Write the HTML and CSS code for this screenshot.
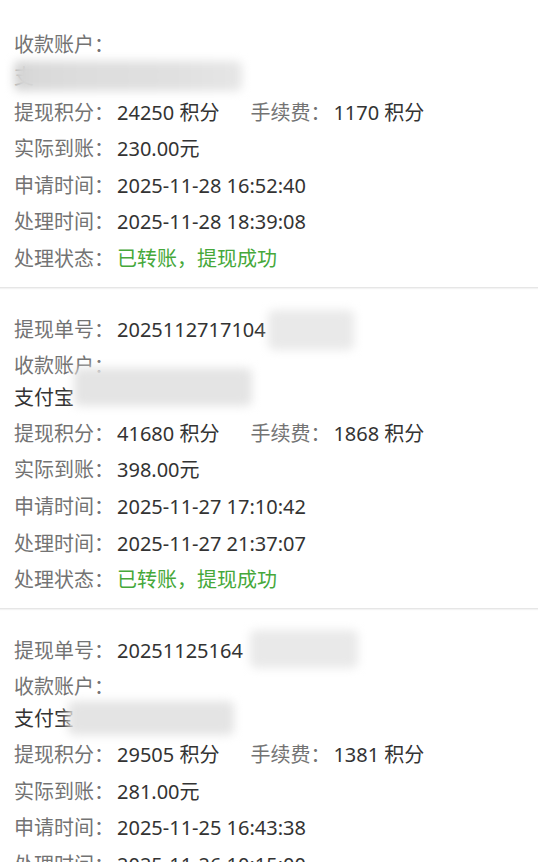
FILE: index.html
```html
<!DOCTYPE html>
<html lang="zh-CN">
<head>
<meta charset="utf-8">
<title>提现记录</title>
<link rel="stylesheet" href="styles.css">
</head>
<body>
<div class="list">
  <div class="card card-first">
    <div class="acct-label">收款账户：</div>
    <div class="acct-value"><span class="dim">支</span></div>
    <div class="row"><span class="label">提现积分：</span><span class="val">24250 积分</span><span class="label fee">手续费：</span><span class="val">1170 积分</span></div>
    <div class="row"><span class="label">实际到账：</span><span class="val">230.00元</span></div>
    <div class="row"><span class="label">申请时间：</span><span class="val">2025-11-28 16:52:40</span></div>
    <div class="row"><span class="label">处理时间：</span><span class="val">2025-11-28 18:39:08</span></div>
    <div class="row"><span class="label">处理状态：</span><span class="ok">已转账，提现成功</span></div>
    <div class="blur b1-acct"></div>
  </div>

  <div class="card">
    <div class="row"><span class="label">提现单号：</span><span class="val">2025112717104</span></div>
    <div class="acct-label">收款账户：</div>
    <div class="acct-value"><span class="val">支付宝</span></div>
    <div class="row"><span class="label">提现积分：</span><span class="val">41680 积分</span><span class="label fee">手续费：</span><span class="val">1868 积分</span></div>
    <div class="row"><span class="label">实际到账：</span><span class="val">398.00元</span></div>
    <div class="row"><span class="label">申请时间：</span><span class="val">2025-11-27 17:10:42</span></div>
    <div class="row"><span class="label">处理时间：</span><span class="val">2025-11-27 21:37:07</span></div>
    <div class="row"><span class="label">处理状态：</span><span class="ok">已转账，提现成功</span></div>
    <div class="blur b2-order"></div>
    <div class="blur b2-acct"></div>
  </div>

  <div class="card">
    <div class="row"><span class="label">提现单号：</span><span class="val">20251125164</span></div>
    <div class="acct-label">收款账户：</div>
    <div class="acct-value"><span class="val">支付宝</span></div>
    <div class="row"><span class="label">提现积分：</span><span class="val">29505 积分</span><span class="label fee">手续费：</span><span class="val">1381 积分</span></div>
    <div class="row"><span class="label">实际到账：</span><span class="val">281.00元</span></div>
    <div class="row"><span class="label">申请时间：</span><span class="val">2025-11-25 16:43:38</span></div>
    <div class="row"><span class="label">处理时间：</span><span class="val">2025-11-26 10:15:00</span></div>
    <div class="row"><span class="label">处理状态：</span><span class="ok">已转账，提现成功</span></div>
    <div class="blur b3-order"></div>
    <div class="blur b3-acct"></div>
  </div>
</div>
</body>
</html>
```

FILE: styles.css
```css
* { box-sizing: border-box; }

html, body {
  margin: 0;
  padding: 0;
  background: #ffffff;
}

body {
  font-family: "Noto Sans", "Noto Sans CJK SC", sans-serif;
  font-size: 20px;
  color: #333333;
  overflow: hidden;
}

.list {
  display: flex;
  flex-direction: column;
}

.card {
  position: relative;
  padding: 24px 14px 9px 14px;
  border-bottom: 1px solid #e6e6e6;
  box-shadow: 0 1px 1px #f3f3f3;
}

.card-first {
  padding-top: 27px;
}

.row {
  line-height: 36.6px;
  height: 36.6px;
  white-space: nowrap;
}

.acct-label {
  line-height: 36.6px;
  height: 36.6px;
  color: #737373;
}

.acct-value {
  line-height: 25px;
  height: 25px;
  margin-bottom: 6px;
  white-space: nowrap;
}

.label {
  color: #737373;
}

.val {
  color: #333333;
  margin-left: 3px;
}

.fee {
  margin-left: 31px;
}

.ok {
  color: #46a83a;
  margin-left: 3px;
}

.dim {
  color: #9a9a9a;
}

.acct-value .val {
  margin-left: 0;
}

.blur {
  position: absolute;
  background: #e2e2e2;
  filter: blur(5px);
  border-radius: 6px;
}

.b1-acct {
  left: 14px;
  top: 61px;
  width: 228px;
  height: 30px;
  background: linear-gradient(90deg, #d2d2d2 0, #d9d9d9 8%, #dddddd 30%, #e0e0e0 70%, #e6e6e6 100%);
}

.b2-order {
  left: 268px;
  top: 22px;
  width: 86px;
  height: 40px;
  background: #e9e9e9;
}

.b2-acct {
  left: 74px;
  top: 80px;
  width: 178px;
  height: 38px;
  background: #e4e4e4;
}

.b3-order {
  left: 250px;
  top: 21px;
  width: 108px;
  height: 38px;
  background: #e9e9e9;
}

.b3-acct {
  left: 68px;
  top: 92px;
  width: 166px;
  height: 34px;
  background: #e4e4e4;
}
```
